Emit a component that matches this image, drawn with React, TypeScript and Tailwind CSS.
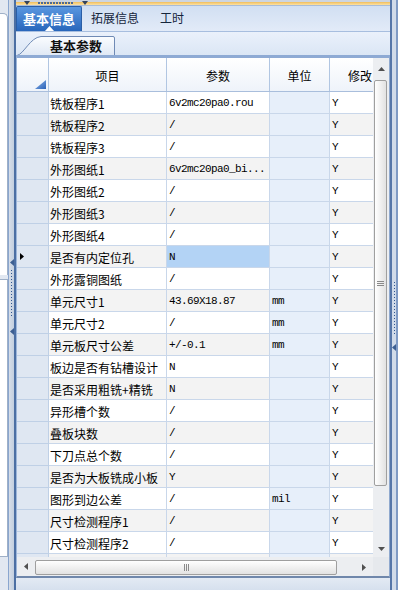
import React from "react";

const rows: [string, string, string][] = [
  ["铣板程序1", "6v2mc20pa0.rou", ""],
  ["铣板程序2", "/", ""],
  ["铣板程序3", "/", ""],
  ["外形图纸1", "6v2mc20pa0_bi...", ""],
  ["外形图纸2", "/", ""],
  ["外形图纸3", "/", ""],
  ["外形图纸4", "/", ""],
  ["是否有内定位孔", "N", ""],
  ["外形露铜图纸", "/", ""],
  ["单元尺寸1", "43.69X18.87", "mm"],
  ["单元尺寸2", "/", "mm"],
  ["单元板尺寸公差", "+/-0.1", "mm"],
  ["板边是否有钻槽设计", "N", ""],
  ["是否采用粗铣+精铣", "N", ""],
  ["异形槽个数", "/", ""],
  ["叠板块数", "/", ""],
  ["下刀点总个数", "/", ""],
  ["是否为大板铣成小板", "Y", ""],
  ["图形到边公差", "/", "mil"],
  ["尺寸检测程序1", "/", ""],
  ["尺寸检测程序2", "/", ""],
  ["", "", ""],
];

const mono = "font-['Liberation_Mono',monospace] text-[11px] tracking-[-0.6px]";

function Dots({ n, vertical }: { n: number; vertical?: boolean }) {
  return (
    <div className={vertical ? "flex flex-col gap-[2px]" : "flex gap-[2px]"}>
      {Array.from({ length: n }).map((_, i) => (
        <div key={i} className="h-[1px] w-[1px] bg-[#2f5590]" />
      ))}
    </div>
  );
}

function LeftArrow() {
  return (
    <svg width="4" height="7" viewBox="0 0 4 7">
      <path d="M4 0 L0 3.5 L4 7 Z" fill="#3d5f92" />
    </svg>
  );
}

export default function App() {
  return (
    <div className="flex h-[590px] w-[398px] overflow-hidden bg-[#dde5f0] font-['Noto_Sans_CJK_SC','Liberation_Sans',sans-serif] text-[12px] leading-none text-black">
      {/* left collapsed panel */}
      <div className="flex w-[8px] shrink-0 flex-col bg-[#e2e8f1] pt-[13px]">
        <div className="h-[262px] rounded-tr-[5px] border-r border-t border-[#9fb0c7] bg-white" />
        <div className="mt-[4px] h-[278px] border-b border-r border-t border-[#9fb0c7] bg-white" />
      </div>
      {/* left splitter */}
      <div className="flex w-[6px] shrink-0 flex-col items-center border-l border-[#8aa6cf] bg-gradient-to-r from-[#d7dee8] to-[#c3cfdf] pt-[259px]">
        <LeftArrow />
        <div className="mt-[4px]">
          <Dots n={16} vertical />
        </div>
        <div className="mt-[12px]">
          <LeftArrow />
        </div>
      </div>
      {/* main column */}
      <div className="flex w-[376px] shrink-0 flex-col border-l-2 border-[#4c6fa3]">
        {/* top strip */}
        <div className="relative flex h-[6px] flex-col">
          <div className="h-[2px] bg-[#cdd5e0]" />
          <div className="h-[3px] bg-gradient-to-b from-[#f0bd58] to-[#fbe2a4]" />
          <div className="h-[1px] bg-[#a9bcd6]" />
          <div className="absolute left-[8px] top-[1px]">
            <svg width="6" height="4" viewBox="0 0 6 4">
              <path d="M0 0 L6 0 L3 4 Z" fill="#33435a" />
            </svg>
          </div>
          <div className="absolute left-[22px] top-[2px]">
            <div className="flex gap-[1px]">
              {Array.from({ length: 12 }).map((_, i) => (
                <div key={i} className="h-[2px] w-[2px] bg-[#4d6a94]" />
              ))}
            </div>
          </div>
          <div className="absolute left-[66px] top-[1px]">
            <svg width="6" height="4" viewBox="0 0 6 4">
              <path d="M0 0 L6 0 L3 4 Z" fill="#33435a" />
            </svg>
          </div>
        </div>
        {/* tab bar */}
        <div className="flex h-[26px] items-end border-b border-[#a7bedf] bg-gradient-to-b from-[#d1dff2] to-[#e2ebf8]">
          <div className="relative flex h-[25px] w-[66px] items-center justify-center rounded-t-[2px] border border-b-0 border-[#2a5ea6] bg-gradient-to-b from-[#5a97e0] to-[#2866bb] pb-[1px] text-[13px] font-bold text-white">
            基本信息
            <div className="absolute bottom-0 left-[28px]">
              <svg width="9" height="5" viewBox="0 0 9 5">
                <path d="M0 5 L4.5 0 L9 5 Z" fill="#ffffff" />
              </svg>
            </div>
          </div>
          <div className="ml-[9px] flex h-[25px] items-center pb-[1px] text-[12px] text-[#15253b]">拓展信息</div>
          <div className="ml-[21px] flex h-[25px] items-center pb-[1px] text-[12px] text-[#15253b]">工时</div>
        </div>
        {/* sub tab area */}
        <div className="flex h-[23px] items-end bg-gradient-to-b from-[#eaf1fb] to-[#dbe6f5]">
          <div className="relative h-[20px] w-[100px]">
            <svg className="absolute inset-0" width="100" height="20" viewBox="0 0 100 20">
              <defs>
                <linearGradient id="st" x1="0" y1="0" x2="0" y2="1">
                  <stop offset="0" stopColor="#fbfdff" />
                  <stop offset="1" stopColor="#dfe8f5" />
                </linearGradient>
              </defs>
              <path d="M1 20.5 C 8 19, 14 2.5, 25 1.5 L 97 1.5 Q 98.5 1.5 98.5 3 L 98.5 20.5" fill="url(#st)" stroke="#6f8ab5" strokeWidth="1" />
            </svg>
            <span className="relative block pl-[34px] pt-[3px] text-[13px] font-bold leading-[16px] text-[#111]">基本参数</span>
          </div>
        </div>
        {/* grid frame */}
        <div className="flex h-[523px] flex-col border-b-2 border-l border-r border-t-[3px] border-b-[#6f87ab] border-l-[#9db6da] border-r-[#8fa9cf] border-t-[#8eaad4]">
          <div className="flex h-[499px]">
            {/* grid body */}
            <div className="w-[356px] overflow-hidden">
              {/* header */}
              <div className="flex h-[34px] w-[373px] border-b border-[#a9bedc] bg-gradient-to-b from-white to-[#eef3fa]">
                <div className="flex w-[32px] shrink-0 items-end justify-end border-r border-[#b1c6e2] pb-[2px] pr-[2px]">
                  <svg width="11" height="9" viewBox="0 0 11 9">
                    <defs>
                      <linearGradient id="tri" x1="0" y1="0" x2="1" y2="1">
                        <stop offset="0" stopColor="#8fb6ea" />
                        <stop offset="1" stopColor="#2a62b8" />
                      </linearGradient>
                    </defs>
                    <path d="M11 0 L11 9 L0 9 Z" fill="url(#tri)" />
                  </svg>
                </div>
                <div className="flex w-[118px] shrink-0 items-center justify-center border-r border-[#b1c6e2] pt-[3px]">项目</div>
                <div className="flex w-[103px] shrink-0 items-center justify-center border-r border-[#b1c6e2] pt-[3px]">参数</div>
                <div className="flex w-[60px] shrink-0 items-center justify-center border-r border-[#b1c6e2] pt-[3px]">单位</div>
                <div className="flex w-[60px] shrink-0 items-center justify-center pt-[3px]">修改</div>
              </div>
              {/* rows */}
              {rows.map((r, i) => {
                const sel = i === 7;
                const even = i % 2 === 1;
                return (
                  <div key={i} className={`flex h-[22px] w-[373px] ${even ? "bg-[#f3f3f3]" : "bg-white"}`}>
                    <div className="flex w-[32px] shrink-0 items-center border-b border-r border-[#bfd0e6] bg-[#dfe7f2] pl-[3px]">
                      {sel && (
                        <svg width="4" height="7" viewBox="0 0 4 7">
                          <path d="M0 0 L4 3.5 L0 7 Z" fill="#000" />
                        </svg>
                      )}
                    </div>
                    <div className="flex w-[118px] shrink-0 items-center overflow-hidden whitespace-nowrap border-b border-r border-[#c9d7ea] pl-[1px] pt-[2px]">
                      {r[0]}
                    </div>
                    <div className={`flex w-[103px] shrink-0 items-center overflow-hidden whitespace-nowrap border-b border-r border-[#c9d7ea] pl-[2px] pt-[2px] ${sel ? "bg-[#b3d3f5]" : ""} ${mono}`}>
                      {r[1]}
                    </div>
                    <div className={`flex w-[60px] shrink-0 items-center border-b border-r border-[#c9d7ea] bg-[#e7effa] pl-[2px] pt-[2px] ${mono}`}>
                      {r[2]}
                    </div>
                    <div className={`flex w-[60px] shrink-0 items-center border-b border-[#c9d7ea] pl-[2px] pt-[2px] ${mono}`}>
                      {i < 21 ? "Y" : ""}
                    </div>
                  </div>
                );
              })}
            </div>
            {/* vertical scrollbar */}
            <div className="flex w-[16px] shrink-0 flex-col bg-[#eceef1]">
              <div className="flex h-[20px] items-center justify-center pt-[1px]">
                <svg width="7" height="4" viewBox="0 0 7 4">
                  <path d="M0 4 L3.5 0 L7 4 Z" fill="#505050" />
                </svg>
              </div>
              <div className="ml-[1px] mt-[2px] flex h-[406px] w-[13px] items-center justify-center rounded-[2px] border border-[#9f9f9f] bg-gradient-to-r from-white to-[#e2e2e2]">
                <div className="flex flex-col gap-[1px]">
                  <div className="h-[1px] w-[7px] bg-[#8a8a8a]" />
                  <div className="h-[1px] w-[7px] bg-[#8a8a8a]" />
                  <div className="h-[1px] w-[7px] bg-[#8a8a8a]" />
                </div>
              </div>
              <div className="flex-1" />
              <div className="flex h-[16px] items-center justify-center">
                <svg width="7" height="4" viewBox="0 0 7 4">
                  <path d="M0 0 L7 0 L3.5 4 Z" fill="#505050" />
                </svg>
              </div>
            </div>
          </div>
          {/* horizontal scrollbar */}
          <div className="flex h-[19px] bg-[#eceef1]">
            <div className="flex w-[18px] shrink-0 items-center justify-center">
              <svg width="4" height="7" viewBox="0 0 4 7">
                <path d="M4 0 L0 3.5 L4 7 Z" fill="#505050" />
              </svg>
            </div>
            <div className="mt-[3px] flex h-[15px] w-[302px] shrink-0 items-center justify-center rounded-[2px] border border-[#9f9f9f] bg-gradient-to-b from-white to-[#e2e2e2]">
              <div className="flex gap-[1px]">
                <div className="h-[7px] w-[1px] bg-[#8a8a8a]" />
                <div className="h-[7px] w-[1px] bg-[#8a8a8a]" />
                <div className="h-[7px] w-[1px] bg-[#8a8a8a]" />
              </div>
            </div>
            <div className="flex-1" />
            <div className="flex w-[18px] shrink-0 items-center justify-center pt-[2px]">
              <svg width="4" height="7" viewBox="0 0 4 7">
                <path d="M0 0 L4 3.5 L0 7 Z" fill="#505050" />
              </svg>
            </div>
            <div className="w-[16px] shrink-0 bg-[#e6e9ed]" />
          </div>
        </div>
        {/* bottom strip */}
        <div className="flex-1 bg-gradient-to-b from-[#e3eaf4] to-[#d6e0ee]" />
      </div>
      {/* right splitter */}
      <div className="flex w-[8px] shrink-0 flex-col items-center border-l-2 border-r-2 border-l-[#5676a8] border-r-[#7f9ac4] bg-[#d1dbe9] pt-[282px]">
        <Dots n={18} vertical />
        <div className="mt-[10px]">
          <LeftArrow />
        </div>
      </div>
    </div>
  );
}
